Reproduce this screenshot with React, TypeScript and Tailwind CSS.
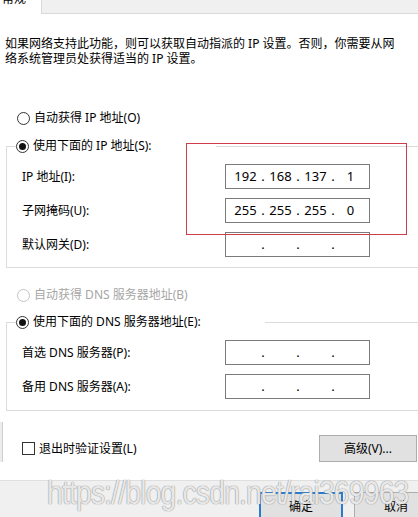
import type { ReactNode } from 'react';

const font = "font-['Noto_Sans','Noto_Sans_CJK_SC',sans-serif]";

function Radio({ checked = false, disabled = false }: { checked?: boolean; disabled?: boolean }) {
  return (
    <span
      className={`flex h-[13px] w-[13px] shrink-0 items-center justify-center rounded-full border bg-white ${
        disabled ? 'border-[#c4c4c4]' : 'border-[#333333]'
      }`}
    >
      {checked && <span className="h-[7px] w-[7px] rounded-full bg-[#111111]" />}
    </span>
  );
}

function RadioRow({ children, checked, disabled }: { children: ReactNode; checked?: boolean; disabled?: boolean }) {
  return (
    <div className={`flex h-[16px] items-center gap-[4px] leading-[16px] ${disabled ? 'text-[#a6a6a6]' : ''}`}>
      <Radio checked={checked} disabled={disabled} />
      <span className="whitespace-nowrap">{children}</span>
    </div>
  );
}

function IpBox({ parts }: { parts: string[] }) {
  return (
    <div className="flex h-[25px] w-[145px] items-center border border-[#7a7a7a] bg-white pl-[4px] text-[13px] leading-[23px]">
      {parts.map((p, i) => (
        <div key={i} className="flex items-center">
          {i > 0 && <span className="w-[4px] text-center">.</span>}
          <span className="w-[31px] text-center">{p}</span>
        </div>
      ))}
    </div>
  );
}

function Row({ label, parts }: { label: string; parts: string[] }) {
  return (
    <div className="flex items-center">
      <span className="w-[203px] whitespace-nowrap">{label}</span>
      <IpBox parts={parts} />
    </div>
  );
}

export default function App() {
  return (
    <div className={`relative h-[517px] w-[418px] overflow-hidden bg-white text-[12px] text-black ${font}`}>
      {/* tab strip */}
      <div className="flex h-[14px]">
        <div className="w-[42px] overflow-hidden border-r border-[#d9d9d9] bg-white pl-[2px]">
          <div className="-mt-[7px] leading-[12px]">常规</div>
        </div>
        <div className="flex-1 border-b border-[#d9d9d9] bg-[#f0f0f0]" />
      </div>

      <div className="mt-[22px] px-[5px] leading-[15px]">
        <div className="whitespace-nowrap">如果网络支持此功能，则可以获取自动指派的 IP 设置。否则，你需要从网</div>
        <div className="whitespace-nowrap">络系统管理员处获得适当的 IP 设置。</div>
      </div>

      <div className="mt-[44px] pl-[17px]">
        <RadioRow>自动获得 IP 地址(O)</RadioRow>
      </div>

      <fieldset className="ml-[6px] mt-[12px] w-[430px] border border-[#dcdcdc] pb-[10px]">
        <legend className="ml-[9px] w-[200px]">
          <RadioRow checked>使用下面的 IP 地址(S):</RadioRow>
        </legend>
        <div className="mt-[10px] flex flex-col gap-[9px] pl-[15px]">
          <Row label="IP 地址(I):" parts={['192', '168', '137', '1']} />
          <Row label="子网掩码(U):" parts={['255', '255', '255', '0']} />
          <Row label="默认网关(D):" parts={['', '', '', '']} />
        </div>
      </fieldset>

      <div className="mt-[19px] pl-[17px]">
        <RadioRow disabled>自动获得 DNS 服务器地址(B)</RadioRow>
      </div>

      <fieldset className="ml-[6px] mt-[11px] w-[430px] border border-[#dcdcdc] pb-[11px]">
        <legend className="ml-[9px] w-[249px]">
          <RadioRow checked>使用下面的 DNS 服务器地址(E):</RadioRow>
        </legend>
        <div className="mt-[10px] flex flex-col gap-[9px] pl-[15px]">
          <Row label="首选 DNS 服务器(P):" parts={['', '', '', '']} />
          <Row label="备用 DNS 服务器(A):" parts={['', '', '', '']} />
        </div>
      </fieldset>

      <div className="mt-[24px] flex h-[27px] items-center justify-between pl-[22px]">
        <div className="flex items-center gap-[4px]">
          <span className="h-[13px] w-[13px] border border-[#333333] bg-white" />
          <span>退出时验证设置(L)</span>
        </div>
        <button className="mr-[1px] h-[27px] w-[98px] border border-[#adadad] bg-[#e1e1e1] text-[12px]">
          高级(V)...
        </button>
      </div>

      <div className="mt-[18px] flex h-[37px] gap-[11px] border-t border-[#dfdfdf] bg-[#f0f0f0] pl-[259px] pt-[11px]">
        <button className="h-[30px] w-[84px] shrink-0 border-2 border-[#2a7ccb] bg-[#e1e1e1] text-[12px]">确定</button>
        <button className="h-[30px] w-[84px] shrink-0 border border-[#adadad] bg-[#e1e1e1] text-[12px]">取消</button>
      </div>

      {/* left edge of parent window */}
      <div className="absolute left-0 top-[422px] h-[40px] w-[3px] border-r border-[#d0d0d0] bg-[#ececec]" />

      {/* red annotation box */}
      <div className="pointer-events-none absolute left-[186px] top-[143px] h-[92px] w-[221px] border-[1.5px] border-[#cf3d4a]" />

      {/* watermark */}
      <div className="pointer-events-none absolute left-[47px] top-[473px] origin-left scale-x-[0.86] whitespace-nowrap font-['Liberation_Sans',sans-serif] text-[33px] leading-[40px] tracking-[-1px] text-white/80 [text-shadow:0_0_1px_#8a8a8a,0_0_1px_#8a8a8a]">
        https://blog.csdn.net/rai369963
      </div>
    </div>
  );
}
